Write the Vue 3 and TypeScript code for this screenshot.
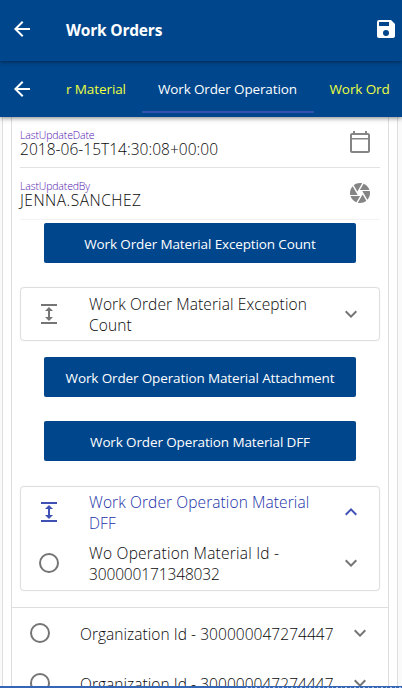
<script setup lang="ts">
interface Field { label: string; value: string; icon: string; cls: string }

const icons = {
  back: 'M20 11H7.830l5.590-5.590L12 4l-8 8 8 8 1.410-1.410L7.830 13H20v-2z',
  save: 'M17 3H5a2 2 0 0 0-2 2v14a2 2 0 0 0 2 2h14c1.100 0 2-.9 2-2V7l-4-4zm-5 16a3 3 0 1 1 0-6 3 3 0 0 1 0 6zm3-10H5V5h10v4z',
  calendar: 'M20 3h-1V1h-2v2H7V1H5v2H4c-1.100 0-2 .9-2 2v16c0 1.100.9 2 2 2h16c1.100 0 2-.9 2-2V5c0-1.100-.9-2-2-2zm0 18H4V9.500h16V21zm0-13H4V5h16v3z',
  shutter: 'M9.400 10.500l4.770-8.260C13.470 2.090 12.750 2 12 2c-2.400 0-4.600.85-6.320 2.250l3.660 6.350.06-.1zM21.540 9c-.92-2.920-3.150-5.260-6-6.340L11.880 9h9.660zm.26 1h-7.490l.29.5 4.760 8.250C21 16.970 22 14.610 22 12c0-.69-.07-1.350-.2-2zM8.540 12l-3.900-6.750C3.010 7.030 2 9.390 2 12c0 .69.07 1.350.2 2h7.490l-1.150-2zm-6.080 3c.92 2.920 3.150 5.260 6 6.340L12.120 15H2.460zm11.270 0l-3.900 6.760c.7.15 1.420.24 2.170.24 2.400 0 4.600-.85 6.320-2.250l-3.660-6.350-.93 1.600z',
  expand: 'M4 20v2h16v-2zM4 2v2h16V2zM13 9h3l-4-4-4 4h3v6H8l4 4 4-4h-3z',
  down: 'M7.410 8.590L12 13.170l4.590-4.580L18 10l-6 6-6-6z',
  up: 'M7.410 15.410L12 10.830l4.590 4.580L18 14l-6-6-6 6z',
  circle: 'M12 2a10 10 0 1 0 0 20 10 10 0 0 0 0-20zm0 18a8 8 0 1 1 0-16 8 8 0 0 1 0 16z',
}

const fields: Field[] = [
  { label: 'LastUpdateDate', value: '2018-06-15T14:30:08+00:00', icon: icons.calendar, cls: 'date' },
  { label: 'LastUpdatedBy', value: 'JENNA.SANCHEZ', icon: icons.shutter, cls: 'user' },
]
const organizations: string[] = ['Organization Id - 300000047274447', 'Organization Id - 300000047274447']
</script>

<template>
  <div class="app">
    <header class="bar top">
      <svg class="icon" viewBox="0 0 24 24"><path :d="icons.back" /></svg>
      <h1>Work Orders</h1>
      <svg class="icon save" viewBox="0 0 24 24"><path :d="icons.save" /></svg>
    </header>
    <nav class="bar tabs">
      <svg class="icon" viewBox="0 0 24 24"><path :d="icons.back" /></svg>
      <div class="strip">
        <span class="tab first">r Material</span>
        <span class="tab active">Work Order Operation</span>
        <span class="tab last">Work Ord</span>
      </div>
    </nav>
    <main class="outer">
      <section class="inner">
        <div class="form">
          <div v-for="f in fields" :key="f.label" class="field">
            <div>
              <div class="label">{{ f.label }}</div>
              <div class="value" :class="f.cls">{{ f.value }}</div>
            </div>
            <svg class="icon" viewBox="0 0 24 24"><path :d="f.icon" /></svg>
          </div>
          <button class="btn b1">Work Order Material Exception Count</button>
          <div class="card closed">
            <div class="row">
              <svg class="icon" viewBox="0 0 24 24"><path :d="icons.expand" /></svg>
              <p>Work Order Material Exception<br>Count</p>
              <svg class="icon" viewBox="0 0 24 24"><path :d="icons.down" /></svg>
            </div>
          </div>
          <button class="btn b2">Work Order Operation Material Attachment</button>
          <button class="btn b3">Work Order Operation Material DFF</button>
          <div class="card open">
            <div class="row selected">
              <svg class="icon" viewBox="0 0 24 24"><path :d="icons.expand" /></svg>
              <p>Work Order Operation Material<br>DFF</p>
              <svg class="icon" viewBox="0 0 24 24"><path :d="icons.up" /></svg>
            </div>
            <div class="row item">
              <svg class="icon" viewBox="0 0 24 24"><path :d="icons.circle" /></svg>
              <p>Wo Operation Material Id -<br><span class="digits">300000171348032</span></p>
              <svg class="icon" viewBox="0 0 24 24"><path :d="icons.down" /></svg>
            </div>
          </div>
        </div>
        <div class="orgs">
          <div v-for="(o, i) in organizations" :key="i" class="org">
            <svg class="icon" viewBox="0 0 24 24"><path :d="icons.circle" /></svg>
            <p>{{ o }}</p>
            <svg class="icon" viewBox="0 0 24 24"><path :d="icons.down" /></svg>
          </div>
        </div>
      </section>
    </main>
    <footer class="edge"><i class="specks"></i></footer>
  </div>
</template>

<style>
body { margin: 0; overflow: hidden; }
</style>

<style scoped>
* { box-sizing: border-box; }
.app { width: 402px; height: 688px; display: flex; flex-direction: column; overflow: hidden; background: #fafafa; color: #080808; font-family: "Open Sans", "Noto Sans", sans-serif; }
h1, p { margin: 0; white-space: nowrap; }
p { font-size: 15.500px; font-weight: 300; }
.icon { width: 24px; height: 24px; flex: none; fill: #757575; display: block; }
.bar { flex: none; display: flex; background: #00468c; color: #fff; padding-left: 10px; }
.bar .icon { fill: #fff; }
.top { height: 61px; padding-top: 17px; z-index: 3; box-shadow: 0 1px 4px rgba(0, 0, 0, .45); }
.top h1 { flex: 1; margin-left: 32px; font-size: 15.500px; line-height: 27px; font-weight: 700; letter-spacing: -.2px; }
.top .save { margin-right: 4px; }
.tabs { height: 56px; padding-top: 16px; z-index: 2; box-shadow: 0 1px 5px rgba(0, 0, 0, .5); }
.strip { flex: 1; display: flex; margin-left: 32px; overflow: hidden; }
.tab { flex: none; height: 36px; font-size: 13.500px; line-height: 25px; letter-spacing: -.1px; color: #eeff41; white-space: nowrap; }
.first { width: 76px; }
.active { width: 172px; padding-left: 16px; color: #fff; letter-spacing: -.14px; border-bottom: 2px solid #3450b0; }
.last { padding-left: 15.500px; }
.outer { flex: none; height: 569px; overflow: hidden; margin: 0 4px 0 2px; padding: 0 8px; border: solid #dedede; border-width: 0 1px; background: #fff; }
.inner { height: 600px; border: solid #dedede; border-width: 0 1px; }
.form { height: 490px; padding: 0 8px; display: flex; flex-direction: column; }
.field { flex: none; height: 51px; display: flex; justify-content: space-between; padding-right: 8px; border-bottom: 1px solid #e2e2e2; }
.field .icon { margin-top: 13px; fill: #858585; }
.field + .field { height: 52px; border-color: #f3f3f3; }
.label { margin-top: 12px; font-size: 10.500px; line-height: 12px; font-weight: 300; letter-spacing: -.15px; color: #4f14ad; }
.value { font-size: 15.500px; line-height: 16px; font-weight: 300; }
.date { letter-spacing: .03px; }
.user { letter-spacing: .5px; }
.btn { flex: none; width: 312px; height: 40px; align-self: center; margin: 0; padding: 0; border: 0; border-radius: 2px; background: #00468c; color: #fff; font: 400 13.500px/40px "Open Sans", "Noto Sans", sans-serif; letter-spacing: -.13px; white-space: nowrap; }
.b1 { margin-top: 3px; padding-top: 1px; }
.b2 { margin-top: 16px; padding-top: 1px; }
.b3 { margin-top: 24px; padding-top: 1px; }
.card { flex: none; border: 1px solid #dedede; border-radius: 4px; box-shadow: 0 0 1px rgba(0, 0, 0, .15); }
.closed { height: 54px; margin-top: 24px; }
.open { height: 105px; margin-top: 25px; }
.row { height: 51px; display: flex; align-items: center; padding: 0 16px; }
.row .icon { margin-bottom: 2px; }
.row p { flex: 1; margin-left: 28px; line-height: 21px; letter-spacing: .1px; }
.row.item p { letter-spacing: .22px; }
.row.item .digits { letter-spacing: -.13px; }
.closed .row { height: 53px; }
.selected { color: #2031a8; }
.selected .icon { fill: #3f51b5; }
.orgs { border-top: 1px solid #dedede; }
.org { height: 50px; display: flex; align-items: center; padding: 0 16px; }
.org p { flex: 1; margin-left: 28px; padding-top: 1px; letter-spacing: .05px; }
.edge { flex: none; height: 2px; display: flex; justify-content: flex-end; align-items: flex-end; background: #3565b5; }
.specks { width: 156px; height: 1px; background: repeating-linear-gradient(90deg, #a9c1e4 0 2px, transparent 2px 5px, #a9c1e4 5px 6px, transparent 6px 9px); }
</style>
